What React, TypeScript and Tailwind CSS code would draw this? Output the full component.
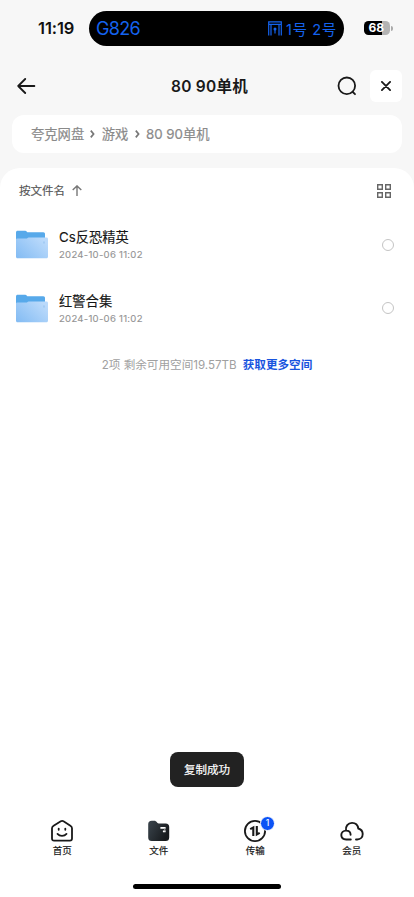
import React from 'react';

function StatusBar() {
  return (
    <header className="flex h-[57px] items-start pt-[11px]">
      <div className="flex h-[35px] w-[89px] items-center pl-[38px] text-[16.5px] font-semibold tracking-[-0.1px] text-[#111]">11:19</div>
      <div className="flex h-[35px] w-[255px] items-center rounded-full bg-black pl-[7px] pr-[7px] text-[#1463ee]">
        <span className="text-[18px] tracking-[-0.7px]">G826</span>
        <svg className="ml-auto" width="14" height="15" viewBox="0 0 14 15" fill="none" stroke="currentColor" strokeWidth="1.2">
          <path d="M.7 14.500V.8h12.600v13.700M.7 3.300h12.600M3 14.500V3.500M11 14.500V3.500" />
          <path d="M7 12.500V8" />
          <circle cx="7" cy="8" r="1.500" fill="currentColor" stroke="none" />
        </svg>
        <span className="ml-[4px] whitespace-nowrap pt-[2px] text-[14.500px] tracking-[0.65px]">1号 2号</span>
      </div>
      <div className="ml-[20px] mt-[10px] flex items-center">
        <div className="flex h-[14px] w-[26px] items-center rounded-[4.5px] bg-[linear-gradient(90deg,#000_68%,#b3b3b3_68%)] pl-[4.500px] text-[12px] font-bold leading-none text-white">68</div>
        <div className="ml-px h-[5px] w-[1.5px] rounded-r bg-[#aaa]" />
      </div>
    </header>
  );
}

function TitleBar() {
  return (
    <div className="grid h-[58px] grid-cols-[96px_1fr_96px] items-center pl-[17px] pr-[12px]">
      <svg width="19" height="16" viewBox="0 0 19 16" fill="none" stroke="#191919" strokeWidth="1.8" strokeLinecap="round" strokeLinejoin="round">
        <path d="M17.4 8H1.2M8.2 1 1.2 8l7 7" />
      </svg>
      <h1 className="whitespace-nowrap pt-[2px] text-center text-[15.500px] font-semibold tracking-[0.25px] text-[#1a1a1a]">80 90单机</h1>
      <div className="flex items-center justify-end gap-[13px]">
        <svg width="20" height="20" viewBox="0 0 20 20" fill="none" stroke="#191919" strokeWidth="1.8" strokeLinecap="round">
          <circle cx="9.8" cy="9.8" r="8.3" />
          <path d="m15.800 16 2.200 2.200" />
        </svg>
        <div className="flex h-[32px] w-[32px] items-center justify-center rounded-[6px] bg-white">
          <svg width="10" height="10" viewBox="0 0 10 10" stroke="#191919" strokeWidth="1.8" strokeLinecap="round"><path d="m.9.9 8.2 8.2M9.1.9.9 9.1" /></svg>
        </div>
      </div>
    </div>
  );
}

function Chevron() {
  return <svg width="5" height="8" viewBox="0 0 5 8" fill="none" stroke="#777" strokeWidth="1.7"><path d="M.8.6 3.6 4 .8 7.4" /></svg>;
}

function Folder({ id }: { id: string }) {
  return (
    <svg width="32" height="29" viewBox="0 0 32 29">
      <defs>
        <linearGradient id={id} x1="0" y1="1" x2="1" y2="0.3">
          <stop stopColor="#82bbf3" />
          <stop offset="1" stopColor="#bbdafb" />
        </linearGradient>
      </defs>
      <path d="M1.7.7h7.7c.8 0 1.3.8 1.9 1.5h16c1.1 0 1.7.7 1.7 1.8V12H0V2.4C0 1.4.7.7 1.7.7Z" fill="#57a9ea" />
      <path d="M1.5 8.6h9c.8 0 1.2-1.2 2-1.2h18c1 0 1.5.6 1.5 1.5v17.8c0 .9-.6 1.5-1.5 1.5h-29C.6 28.200 0 27.600 0 26.700V10c0-.9.6-1.4 1.5-1.4Z" fill={`url(#${id})`} />
      <path d="M28 11.5v2" stroke="#75afe5" strokeWidth=".6" />
    </svg>
  );
}

function FileRow({ name, id }: { name: string; id: string }) {
  return (
    <div className="flex h-[63.5px] items-center pl-[16px] pr-[20px]">
      <Folder id={id} />
      <div className="ml-[11px] flex-1 pt-[2px]">
        <div className="h-[19px] text-[13.3px] leading-[19px] text-[#151515] [-webkit-text-stroke:0.12px_#151515]">{name}</div>
        <div className="h-[16px] text-[9.6px] leading-[16px] tracking-[0.25px] text-[#949494] [-webkit-text-stroke:0.12px_#949494]">2024-10-06 11:02</div>
      </div>
      <div className="h-[12px] w-[12px] rounded-full border border-[#c4c4c4]" />
    </div>
  );
}

function HomeIcon() {
  return (
    <svg width="24" height="24" viewBox="0 0 24 24" fill="none" stroke="#191919" strokeWidth="1.8" strokeLinecap="round" strokeLinejoin="round">
      <path d="M3.600 6.800 10.800 2.300c.8-.5 1.900-.5 2.700 0l6.900 4.500c.9.600 1.600 1.300 1.600 2.500v10.300c0 1.400-.7 2.100-2.100 2.100H4.100C2.700 21.700 2 21 2 19.600V9.300c0-1.200.7-1.900 1.600-2.500Z" />
      <path d="M8.700 9.600v1.200M15.300 9.600v1.200M7.500 14.900c2.200 2.500 6.800 2.500 9 0" />
    </svg>
  );
}

function FilesIcon() {
  return (
    <svg width="24" height="24" viewBox="0 0 24 24">
      <defs><linearGradient id="files" x1="0" y1="0" x2="1" y2=".5"><stop stopColor="#3b454d" /><stop offset="1" stopColor="#171a1d" /></linearGradient></defs>
      <path d="M1.200 5.200c0-2.300 1.200-3.500 3.500-3.500h2.500c2.500 0 2.600 2.700 4.500 2.700h7c2.300 0 3.500 1.200 3.500 3.500v10.600c0 2.400-1.200 3.600-3.500 3.600h-14c-2.300 0-3.500-1.200-3.500-3.600Z" fill="url(#files)" />
      <path d="M13.400 8.900h5.200M15.900 12.400h2.700" stroke="#fff" strokeWidth="1.700" />
      <path d="M17.800 8.900v3.500" stroke="#aaa" strokeWidth="1" />
    </svg>
  );
}

function TransferIcon() {
  return (
    <svg width="24" height="24" viewBox="0 0 24 24" fill="none" stroke="#191919" strokeWidth="1.800">
      <circle cx="12" cy="12" r="10.100" />
      <path d="M10.300 16.900V8.500L7.200 10.200M13.800 7v8.500l2.900-1.700" strokeWidth="2.100" />
    </svg>
  );
}

function CloudIcon() {
  return (
    <svg width="24" height="24" viewBox="0 0 24 24" fill="none" stroke="#191919" strokeWidth="1.900" strokeLinecap="round">
      <path d="M10.800 20.500H6.200C3.200 20.500 1.300 18.700 1.300 16.100c0-2.600 2-4.500 4.700-4.500 2.900 0 4.600 1.600 4.600 4.200M6 11.600c-.8-4.200 2.100-7.700 6-7.700 3.300 0 5.800 2.200 6.300 5.600 2.700.8 4.400 2.900 4.400 5.500 0 3.200-2.200 5.500-5.500 5.500h-1.200" />
    </svg>
  );
}

const tabs = [
  { label: '首页', icon: <HomeIcon /> },
  { label: '文件', icon: <FilesIcon /> },
  { label: '传输', icon: <TransferIcon />, badge: '1' },
  { label: '会员', icon: <CloudIcon /> },
];

export default function App() {
  return (
    <div className="flex h-[897px] w-[414px] flex-col overflow-hidden bg-[#f7f7f7] font-['Inter','Noto_Sans_CJK_SC',sans-serif]">
      <StatusBar />
      <TitleBar />
      <nav className="mx-[12px] flex h-[38px] items-center gap-[6.300px] rounded-[12px] bg-white pl-[19px] text-[13.3px] text-[#8a8a8a] [-webkit-text-stroke:0.2px_#8a8a8a]">
        <span className="pt-px">夸克网盘</span><Chevron /><span className="pt-px">游戏</span><Chevron /><span className="pt-px">80 90单机</span>
      </nav>
      <main className="mt-[15px] flex flex-1 flex-col rounded-t-[20px] bg-white">
        <div className="flex h-[45px] items-center pl-[19px] pr-[23px] text-[11.5px] text-[#555]">
          <span className="pt-[2px] [-webkit-text-stroke:0.15px_#555]">按文件名</span>
          <svg className="ml-[7px]" width="10" height="11" viewBox="0 0 10 11" fill="none" stroke="#777" strokeWidth="1.400"><path d="M5 11V1M.7 5 5 .9 9.300 5" /></svg>
          <svg className="ml-auto" width="14" height="14" viewBox="0 0 14 14" fill="none" stroke="#666" strokeWidth="1.400"><path d="M.7.700h4.600v4.600H.7ZM8.700.700h4.600v4.600H8.700ZM.7 8.700h4.600v4.600H.7ZM8.700 8.700h4.600v4.600H8.700Z" /></svg>
        </div>
        <FileRow name="Cs反恐精英" id="folder-one" />
        <FileRow name="红警合集" id="folder-two" />
        <div className="flex h-[51px] items-center justify-center gap-[6px] text-[11.6px] text-[#a0a0a0]">
          <span>2项 剩余可用空间19.57TB</span>
          <span className="font-semibold text-[#1854de]">获取更多空间</span>
        </div>
        <div className="mx-auto mt-auto flex h-[35px] w-[74px] items-center justify-center rounded-[8px] bg-[#222] pt-[3px] text-[11.500px] text-white [-webkit-text-stroke:0.2px_#fff]">复制成功</div>
        <footer className="mt-[32px] flex h-[78px] flex-col">
          <div className="grid grid-cols-4 px-[14px]">
            {tabs.map((tab) => (
              <div key={tab.label} className="relative flex flex-col items-center">
                {tab.icon}
                {tab.badge && <span className="absolute left-[53px] top-[-3px] flex h-[15px] w-[15px] items-center justify-center rounded-full border border-white bg-[#0c53f5] text-[8.500px] font-medium leading-none text-white">{tab.badge}</span>}
                <span className="pt-px text-[9.500px] leading-[14px] text-[#191919] [-webkit-text-stroke:0.2px_#191919]">{tab.label}</span>
              </div>
            ))}
          </div>
          <div className="mx-auto mt-auto mb-[8px] h-[5px] w-[148px] rounded-full bg-black" />
        </footer>
      </main>
    </div>
  );
}
